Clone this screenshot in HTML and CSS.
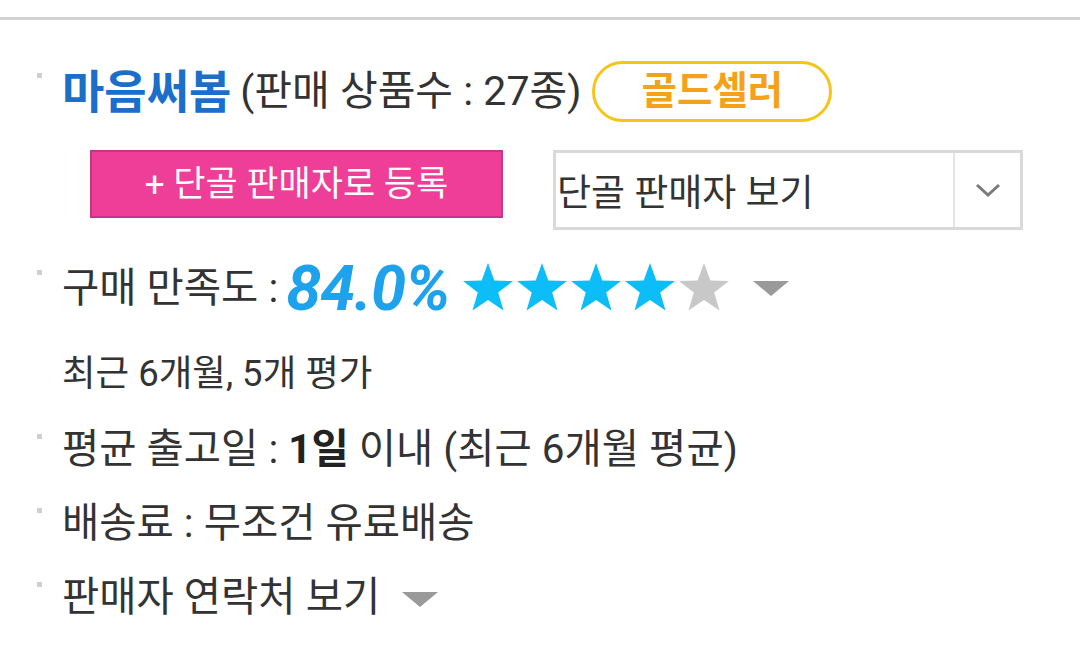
FILE: index.html
```html
<!DOCTYPE html>
<html lang="ko">
<head>
<meta charset="utf-8">
<link rel="stylesheet" href="styles.css">
</head>
<body>
<div class="topline"></div>
<div class="seller">
  <div class="row row-title">
    <span class="bullet"></span>
    <span class="name">마음써봄</span>
    <span class="count">(판매 상품수 : 27종)</span>
    <span class="badge">골드셀러</span>
  </div>
  <div class="actions">
    <button class="fav-btn">+ 단골 판매자로 등록</button>
    <div class="select">
      <span class="select-label">단골 판매자 보기</span>
      <span class="select-arrow">
        <svg width="26" height="16" viewBox="0 0 26 16"><path d="M2 3 L13 13 L24 3" fill="none" stroke="#7a7a7a" stroke-width="3"/></svg>
      </span>
    </div>
  </div>
  <div class="row row-rating">
    <span class="bullet"></span>
    <span class="label">구매 만족도 :</span>
    <span class="percent">84.0%</span>
    <span class="stars">
      <svg width="270" height="52" viewBox="0 0 270 52">
        <defs>
          <path id="star" d="M27 1 L33.3 18.6 L52 19.1 L37.2 30.6 L42.5 48.5 L27 38 L11.5 48.5 L16.8 30.6 L2 19.1 L20.7 18.6 Z"/>
          <clipPath id="part"><rect x="216" y="0" width="13" height="52"/></clipPath>
        </defs>
        <use href="#star" x="0" fill="#0dbdf8"/>
        <use href="#star" x="54" fill="#0dbdf8"/>
        <use href="#star" x="108" fill="#0dbdf8"/>
        <use href="#star" x="162" fill="#0dbdf8"/>
        <use href="#star" x="216" fill="#c8c8c8"/>
        <use href="#star" x="216" fill="#0dbdf8" clip-path="url(#part)"/>
      </svg>
    </span>
    <span class="tri"></span>
  </div>
  <div class="row row-sub">
    <span class="nobullet"></span>
    <span class="sub">최근 6개월, 5개 평가</span>
  </div>
  <div class="row">
    <span class="bullet"></span>
    <span class="label">평균 출고일 : <b>1일</b> 이내 (최근 6개월 평균)</span>
  </div>
  <div class="row">
    <span class="bullet"></span>
    <span class="label">배송료 : 무조건 유료배송</span>
  </div>
  <div class="row">
    <span class="bullet"></span>
    <span class="label">판매자 연락처 보기</span>
    <span class="tri tri-contact"></span>
  </div>
</div>
</body>
</html>
```

FILE: styles.css
```css
html, body {
  margin: 0;
  padding: 0;
  background: #fff;
}
body {
  width: 1080px;
  height: 651px;
  overflow: hidden;
  font-family: Roboto, "Noto Sans CJK KR", sans-serif;
  color: #333;
}
.topline {
  margin-top: 17px;
  height: 3px;
  background: #d3d3d3;
}
.seller {
  padding-left: 37px;
}
.row {
  display: flex;
  align-items: center;
  height: 74px;
  font-size: 40.5px;
  line-height: 1;
  white-space: nowrap;
}
.bullet {
  width: 5px;
  height: 5px;
  background: #cfcfcf;
  align-self: flex-start;
  margin-top: 22px;
  margin-right: 20px;
  flex: none;
}
.nobullet {
  width: 25px;
  flex: none;
}
.row-title {
  margin-top: 38px;
  height: 67px;
}
.row-title .bullet {
  margin-top: 15px;
}
.name {
  color: #1b6fcb;
  font-weight: 700;
  font-size: 46px;
  margin-right: 9px;
}
.count {
  font-size: 41px;
}
.badge {
  margin-left: 11px;
  height: 55px;
  width: 234px;
  border: 3px solid #f6c418;
  border-radius: 32px;
  display: flex;
  align-items: center;
  justify-content: center;
  color: #f5a21a;
  font-weight: 700;
  font-size: 38.5px;
}
.actions {
  display: flex;
  align-items: flex-start;
  margin-top: 25px;
  padding-left: 53px;
  height: 80px;
}
.fav-btn {
  width: 413px;
  height: 68px;
  background: #ef3e97;
  border: 2px solid #c6358a;
  color: #fff;
  font-family: Roboto, "Noto Sans CJK KR", sans-serif;
  font-size: 35px;
  line-height: 1;
  padding: 0;
  margin: 0;
}
.select {
  margin-left: 50px;
  width: 464px;
  height: 74px;
  border: 3px solid #d9d9d9;
  display: flex;
  align-items: center;
}
.select-label {
  flex: 1;
  padding-left: 1px;
  font-size: 37px;
  color: #333;
}
.select-arrow {
  width: 65px;
  height: 100%;
  border-left: 2px solid #e4e4e4;
  display: flex;
  align-items: center;
  justify-content: center;
}
.row-rating {
  height: 76px;
  margin-top: 20px;
}
.row-rating .bullet {
  margin-top: 20px;
}
.percent {
  color: #1ea2ec;
  font-weight: 700;
  font-style: italic;
  font-size: 63px;
  margin-left: 8px;
  letter-spacing: -1px;
}
.stars {
  margin-left: 12px;
  display: flex;
}
.tri {
  width: 0;
  height: 0;
  border-left: 18px solid transparent;
  border-right: 18px solid transparent;
  border-top: 15px solid #9a9a9a;
  margin-left: 22px;
}
.tri-contact {
  margin-left: 22px;
  margin-top: 4px;
}
.row-sub {
  height: 86px;
  align-items: flex-start;
}
.sub {
  font-size: 36.5px;
  margin-top: 30px;
}
b {
  font-weight: 700;
  color: #222;
}
```
